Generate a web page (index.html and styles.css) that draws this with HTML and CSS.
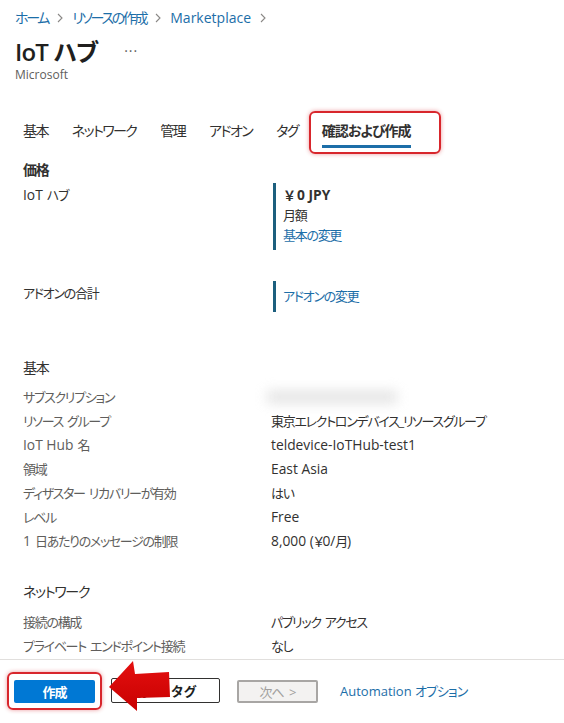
FILE: index.html
```html
<!DOCTYPE html>
<html lang="ja">
<head>
    <meta charset="UTF-8">
    <meta name="viewport" content="width=device-width, initial-scale=1.0">
    <title>IoT ハブ - 確認および作成</title>
    <link rel="stylesheet" href="styles.css">
</head>
<body>
<div class="page">

    <main class="content">
        <!-- パンくず -->
        <nav class="breadcrumb">
            <a href="#">ホーム</a>
            <svg class="chev" viewBox="0 0 6 10"><path d="M1 1l4 4-4 4"/></svg>
            <a href="#">リソースの作成</a>
            <svg class="chev" viewBox="0 0 6 10"><path d="M1 1l4 4-4 4"/></svg>
            <a href="#" class="en">Marketplace</a>
            <svg class="chev" viewBox="0 0 6 10"><path d="M1 1l4 4-4 4"/></svg>
        </nav>

        <div class="title-row">
            <h1>IoT ハブ</h1>
            <span class="more">···</span>
        </div>
        <div class="publisher">Microsoft</div>

        <!-- タブ -->
        <div class="tabs">
            <span class="tab">基本</span>
            <span class="tab">ネットワーク</span>
            <span class="tab">管理</span>
            <span class="tab">アドオン</span>
            <span class="tab">タグ</span>
            <span class="tab active">確認および作成</span>
        </div>

        <!-- 価格 -->
        <section class="block">
            <h3 class="heading bold">価格</h3>
            <div class="price-row first">
                <div class="label dark"><span class="en">IoT</span> ハブ</div>
                <div class="price-box">
                    <div class="amount"><span class="yen">￥</span><span class="en">0 JPY</span></div>
                    <div>月額</div>
                    <a href="#">基本の変更</a>
                </div>
            </div>
            <div class="price-row second">
                <div class="label dark">アドオンの合計</div>
                <div class="price-box small">
                    <a href="#">アドオンの変更</a>
                </div>
            </div>
        </section>

        <!-- 基本 -->
        <section class="block basic">
            <h3 class="heading">基本</h3>
            <div class="summary">
                <div class="label">サブスクリプション</div>
                <div class="value"><div class="blurred"></div></div>
                <div class="label">リソース グループ</div>
                <div class="value">東京エレクトロンデバイス_リソースグループ</div>
                <div class="label"><span class="en">IoT Hub</span> 名</div>
                <div class="value en">teldevice-IoTHub-test1</div>
                <div class="label">領域</div>
                <div class="value en">East Asia</div>
                <div class="label">ディザスター リカバリーが有効</div>
                <div class="value">はい</div>
                <div class="label">レベル</div>
                <div class="value en">Free</div>
                <div class="label"><span class="en">1</span> 日あたりのメッセージの制限</div>
                <div class="value"><span class="en">8,000 (</span>￥<span class="en">0/</span>月<span class="en">)</span></div>
            </div>
        </section>

        <!-- ネットワーク -->
        <section class="block network">
            <h3 class="heading">ネットワーク</h3>
            <div class="summary">
                <div class="label">接続の構成</div>
                <div class="value">パブリック アクセス</div>
                <div class="label">プライベート エンドポイント接続</div>
                <div class="value">なし</div>
            </div>
        </section>
    </main>

    <!-- 下部ボタン -->
    <footer class="actions">
        <button class="btn primary">作成</button>
        <button class="btn outline">前へ : タグ</button>
        <button class="btn disabled">次へ &gt;</button>
        <a href="#" class="automation"><span class="en">Automation</span> オプション</a>

        <svg class="arrow" viewBox="0 0 70 55">
            <defs>
                <linearGradient id="arrowFill" x1="0" y1="0" x2="0" y2="1">
                    <stop offset="0" stop-color="#e41010"/>
                    <stop offset="1" stop-color="#c80000"/>
                </linearGradient>
            </defs>
            <polygon points="4,27 28,1 30,14 64,12 65,37 32,38 32,51" fill="url(#arrowFill)"/>
        </svg>
    </footer>

</div>
</body>
</html>
```

FILE: styles.css
```css
* {
    box-sizing: border-box;
}

body {
    margin: 0;
    background: #fff;
    color: #323130;
    font-family: 'Open Sans', 'Noto Sans CJK JP', sans-serif;
    font-feature-settings: "palt";
    font-size: 13px;
}

a {
    color: #1c6ea8;
    text-decoration: none;
}

/* 英字部分は詰めない */
.en {
    letter-spacing: 0;
    word-spacing: 0;
    font-size: 13.8px;
}

.page {
    height: 100vh;
    display: flex;
    flex-direction: column;
}

.content {
    height: 659px;
    overflow: hidden;
    padding-left: 15px;
    flex-shrink: 0;
}

/* パンくず */
.breadcrumb {
    display: flex;
    align-items: center;
    gap: 9px;
    padding-top: 8px;
    line-height: 20px;
    font-size: 14px;
    letter-spacing: -2.3px;
}

.breadcrumb .en {
    font-size: 14px;
}

.chev {
    width: 6px;
    height: 10px;
    fill: none;
    stroke: #8a8886;
    stroke-width: 1.1;
}

.title-row {
    display: flex;
    align-items: center;
    margin-top: 6px;
    height: 32px;
}

h1 {
    margin: 0;
    font-size: 24px;
    font-weight: 600;
    color: #201f1e;
    letter-spacing: -0.8px;
}

.more {
    margin-left: 27px;
    color: #605e5c;
    font-size: 14px;
    letter-spacing: 1px;
}

.publisher {
    margin-top: 1px;
    line-height: 16px;
    font-size: 12px;
    color: #605e5c;
}

/* タブ */
.tabs {
    display: flex;
    gap: 24px;
    margin-top: 38px;
    padding-left: 8px;
    font-size: 14px;
    letter-spacing: -1.6px;
}

.tab {
    line-height: 20px;
    padding-bottom: 4px;
    border-bottom: 3px solid transparent;
}

.tab.active {
    position: relative;
    font-weight: 700;
    letter-spacing: -1px;
    border-bottom-color: #1c6ea8;
}

.tab.active::after {
    content: "";
    position: absolute;
    left: -13px;
    right: -30px;
    top: -10px;
    bottom: -9px;
    border: 2px solid #d8262c;
    border-radius: 6px;
    box-shadow: 0 0 4px rgba(210, 30, 40, 0.45);
}

/* セクション */
.block {
    padding-left: 8px;
    letter-spacing: -1.3px;
    word-spacing: 2px;
}

.heading {
    margin: 12px 0 0;
    line-height: 20px;
    font-size: 14px;
    font-weight: 400;
    color: #323130;
}

.heading.bold {
    font-weight: 700;
}

.label {
    color: #605e5c;
}

.label.dark {
    color: #323130;
}

.price-row {
    display: grid;
    grid-template-columns: 250px 1fr;
    line-height: 20px;
}

.price-row .label {
    padding-top: 2px;
}

.price-row.first {
    margin-top: 3px;
}

.price-row.second {
    margin-top: 31px;
}

.price-box {
    border-left: 3px solid #1c5f7e;
    padding: 2px 0 5px 7px;
}

.price-box.small {
    padding: 5px 0 6px 7px;
}

.amount {
    font-weight: 700;
}

.amount .yen {
    font-feature-settings: normal;
    letter-spacing: 0;
    margin-right: 1px;
}

.basic .heading {
    margin-top: 46px;
}

.network .heading {
    margin-top: 29px;
}

.summary {
    display: grid;
    grid-template-columns: 248px 1fr;
    line-height: 24px;
    margin-top: 7px;
}

.network .summary {
    margin-top: 8px;
}

.value {
    color: #323130;
}

.blurred {
    width: 130px;
    height: 14px;
    margin: 5px 0 0 -4px;
    background: #dcdcdc;
    filter: blur(6px);
    opacity: 0.7;
}

/* 下部ボタン */
.actions {
    position: relative;
    flex: 1;
    display: flex;
    align-items: flex-start;
    border-top: 1px solid #e1dfdd;
    padding: 19px 0 0 14px;
    letter-spacing: -1px;
    word-spacing: 1px;
}

.btn {
    height: 23px;
    padding: 0;
    font-family: inherit;
    font-size: 13px;
    letter-spacing: -1px;
    word-spacing: 3px;
    border-radius: 2px;
}

.btn.primary {
    position: relative;
    width: 81px;
    background: #0078d4;
    border: none;
    color: #fff;
    font-weight: 700;
    margin-top: 1px;
}

.btn.primary::after {
    content: "";
    position: absolute;
    left: -7px;
    right: -7px;
    top: -8px;
    bottom: -7px;
    border: 2px solid #d8262c;
    border-radius: 6px;
    box-shadow: 0 0 4px rgba(210, 30, 40, 0.45);
}

.btn.outline {
    width: 109px;
    height: 25px;
    margin-left: 16px;
    margin-top: -1px;
    background: #fff;
    border: 1px solid #323130;
    color: #201f1e;
    font-weight: 600;
    letter-spacing: 0;
    word-spacing: 0;
}

.btn.disabled {
    width: 81px;
    margin-left: 17px;
    margin-top: 1px;
    background: #f3f2f1;
    border: 2px solid #a8a6a4;
    color: #a19f9d;
}

.automation {
    margin-left: 22px;
    margin-top: 1px;
    line-height: 23px;
    font-size: 13px;
}

.automation .en {
    font-size: 13px;
}

.arrow {
    position: absolute;
    left: 105px;
    top: 0;
    width: 70px;
    height: 55px;
}
```
